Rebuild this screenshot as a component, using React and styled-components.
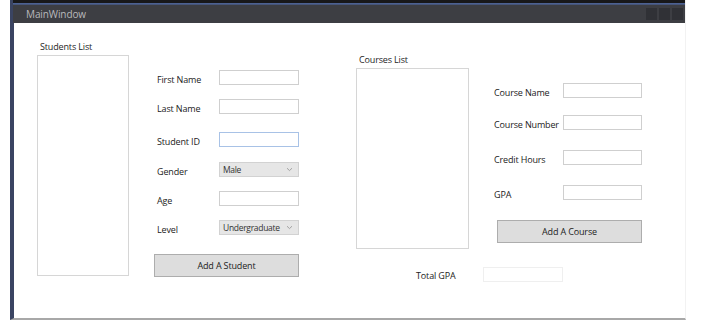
import React from "react";
import styled, { createGlobalStyle } from "styled-components";

const GlobalStyle = createGlobalStyle`
  body {
    margin: 0;
    background: #fff;
    font-family: "Open Sans", "Noto Sans", sans-serif;
  }
`;

const Chevron = () => (
  <svg width="7" height="5" viewBox="0 0 7 5">
    <path d="M1 1.2 L3.5 3.6 L6 1.2" fill="none" stroke="#9a9a9a" strokeWidth="0.9" />
  </svg>
);

const App = () => {
  return (
    <>
      <GlobalStyle />
      <Window>
        <TitleBar>
          <Title>MainWindow</Title>
          <Controls>
            <CtrlBox />
            <CtrlBox />
            <CtrlBox />
          </Controls>
        </TitleBar>
        <Content>
          <ListColumn top={18}>
            <ListLabel>Students List</ListLabel>
            <ListBox w={92} h={221} />
          </ListColumn>

          <Form top={47} left={25} labelW={62} labelPad={3}>
            <Row>
              <Label>First Name</Label>
              <Input />
            </Row>
            <Row gap={14}>
              <Label>Last Name</Label>
              <Input />
            </Row>
            <Row gap={18}>
              <Label>Student ID</Label>
              <Input focused />
            </Row>
            <Row gap={15}>
              <Label>Gender</Label>
              <Combo>
                <span>Male</span>
                <Chevron />
              </Combo>
            </Row>
            <Row gap={14}>
              <Label>Age</Label>
              <Input />
            </Row>
            <Row gap={14}>
              <Label>Level</Label>
              <Combo>
                <span>Undergraduate</span>
                <Chevron />
              </Combo>
            </Row>
            <Button gap={19}>Add A Student</Button>
          </Form>

          <CoursesSection>
            <CoursesTop>
              <ListColumn top={0} left={57}>
                <ListLabel>Courses List</ListLabel>
                <ListBox w={113} h={181} />
              </ListColumn>
              <Form top={29} left={25} labelW={69} buttonPad={3}>
                <Row>
                  <Label>Course Name</Label>
                  <Input w={79} />
                </Row>
                <Row gap={17}>
                  <Label>Course Number</Label>
                  <Input w={79} />
                </Row>
                <Row gap={20}>
                  <Label>Credit Hours</Label>
                  <Input w={79} />
                </Row>
                <Row gap={20}>
                  <Label>GPA</Label>
                  <Input w={79} />
                </Row>
                <Button gap={20}>Add A Course</Button>
              </Form>
            </CoursesTop>
            <TotalRow>
              <TotalLabel>Total GPA</TotalLabel>
              <Input faint />
            </TotalRow>
          </CoursesSection>
        </Content>
      </Window>
    </>
  );
};

export default App;

const Window = styled.div`
  margin-left: 10px;
  width: 671px;
  height: 318px;
  display: flex;
  flex-direction: column;
  border-left: 4px solid #3a4462;
  border-bottom: 2px solid #a8a8a8;
  border-right: 1px solid #f2f2f2;
  background: #fff;
`;

const TitleBar = styled.div`
  height: 19px;
  display: flex;
  align-items: center;
  justify-content: space-between;
  background: #3d3e43;
  border-top: 3px solid #18181a;
  box-shadow: inset 0 1px 0 #4c6192, inset 0 2px 0 #46557a;
  padding: 1px 2px 0 13px;
  margin-left: -1px;
`;

const Title = styled.span`
  font-size: 10px;
  color: #b9b9bc;
  letter-spacing: -0.1px;
`;

const Controls = styled.div`
  display: flex;
  gap: 2px;
  margin-top: 1px;
`;

const CtrlBox = styled.div`
  width: 11px;
  height: 12px;
  background: #303136;
`;

const Content = styled.div`
  flex: 1;
  display: flex;
  align-items: flex-start;
  padding-left: 23px;
`;

const ListColumn = styled.div`
  display: flex;
  flex-direction: column;
  margin-top: ${(p) => p.top}px;
  margin-left: ${(p) => p.left || 0}px;
`;

const ListLabel = styled.div`
  font-size: 9px;
  line-height: 12px;
  letter-spacing: -0.15px;
  color: #1e1e1e;
  padding-left: 3px;
  margin-bottom: 2px;
`;

const ListBox = styled.div`
  width: ${(p) => p.w}px;
  height: ${(p) => p.h}px;
  box-sizing: border-box;
  border: 1px solid #d6d6d6;
  background: #fff;
`;

const Form = styled.div`
  display: flex;
  flex-direction: column;
  margin-top: ${(p) => p.top}px;
  margin-left: ${(p) => p.left}px;
  --label-w: ${(p) => p.labelW}px;
  --label-pad: ${(p) => p.labelPad || 0}px;
  --button-pad: ${(p) => p.buttonPad || 0}px;
`;

const Row = styled.div`
  display: flex;
  align-items: center;
  height: 15px;
  margin-top: ${(p) => p.gap || 0}px;
  padding-left: var(--label-pad);
`;

const Label = styled.span`
  width: var(--label-w);
  font-size: 9px;
  letter-spacing: -0.15px;
  color: #222;
  margin-top: 3px;
`;

const Input = styled.div`
  width: ${(p) => p.w || 80}px;
  height: 15px;
  box-sizing: border-box;
  border: 1px solid
    ${(p) => (p.focused ? "#a8c2e6" : p.faint ? "#efefef" : "#cfcfcf")};
  background: #fff;
`;

const Combo = styled.div`
  width: 80px;
  height: 15px;
  box-sizing: border-box;
  display: flex;
  align-items: center;
  justify-content: space-between;
  padding: 0 5px 0 3px;
  border: 1px solid #d2d2d2;
  background: #e6e6e6;
  font-size: 8.5px;
  letter-spacing: -0.3px;
  color: #333;
`;

const Button = styled.div`
  width: 145px;
  height: 23px;
  box-sizing: border-box;
  margin-top: ${(p) => p.gap}px;
  margin-left: var(--button-pad);
  display: flex;
  align-items: center;
  justify-content: center;
  border: 1px solid #adadad;
  background: #dddddd;
  font-size: 9px;
  letter-spacing: -0.15px;
  color: #222;
`;

const CoursesSection = styled.div`
  display: flex;
  flex-direction: column;
  margin-top: 31px;
`;

const CoursesTop = styled.div`
  display: flex;
  align-items: flex-start;
`;

const TotalRow = styled.div`
  display: flex;
  align-items: center;
  margin-top: 18px;
  margin-left: 117px;
  height: 15px;
`;

const TotalLabel = styled.span`
  width: 67px;
  font-size: 9px;
  letter-spacing: -0.15px;
  color: #222;
  margin-top: 2px;
`;
